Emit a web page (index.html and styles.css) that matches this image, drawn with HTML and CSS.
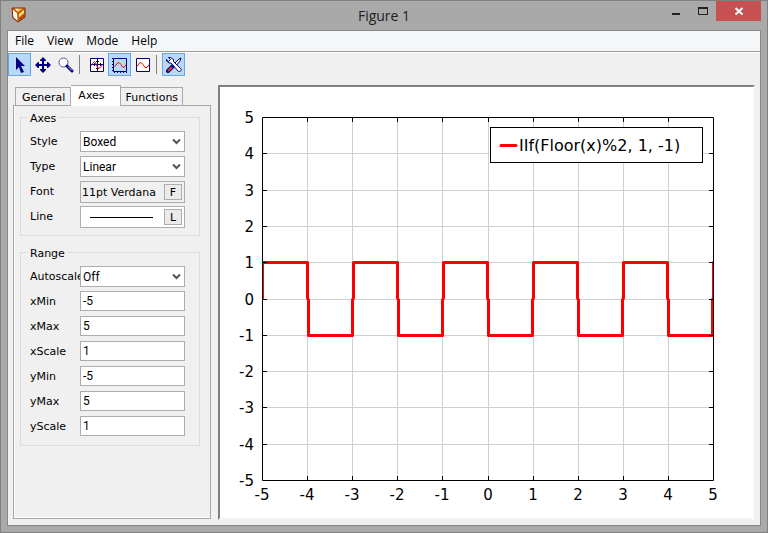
FILE: index.html
```
<!DOCTYPE html>
<html lang="en">
<head>
    <meta charset="UTF-8">
    <title>Figure 1</title>
    <link rel="stylesheet" href="styles.css">
</head>
<body>

<div class="window">

    <header class="titlebar">
        <svg class="logo" width="16" height="16" viewBox="0 0 16 16">
            <path d="M1 1h13v9l-7 5-5-4z" fill="#e07a10"/>
            <path d="M1 2l5 4 1 8-5-4z" fill="#fffaf0"/>
            <path d="M3 1h9L7 5z" fill="#ffc24a"/>
            <path d="M4 1h4L6 4z" fill="#fff0c0"/>
            <path d="M8 7l5-4v3l-5 4z" fill="#ffe080"/>
            <path d="M8 11l5-4v3l-5 4z" fill="#b84a08"/>
            <path d="M1 1h13v9l-7 5-5-4z" fill="none" stroke="#7a2206"/>
            <path d="M2 2l5 4 6-4M7 6v8" fill="none" stroke="#a04008" stroke-width=".8"/>
        </svg>
        <h1>Figure 1</h1>
        <div class="controls">
            <button type="button" aria-label="Minimize"><svg width="10" height="10" viewBox="0 0 10 10"><path d="M1 7h8v2H1z"/></svg></button>
            <button type="button" aria-label="Maximize"><svg width="10" height="10" viewBox="0 0 10 10"><path d="M0 1h10v8H0zM1 3v5h8V3z" fill-rule="evenodd"/></svg></button>
            <button type="button" class="close" aria-label="Close"><svg width="10" height="10" viewBox="0 0 10 10"><path d="M1.500 2l7 6.500M8.500 2l-7 6.500" fill="none" stroke="#fff" stroke-width="2"/></svg></button>
        </div>
    </header>

    <div class="client">

        <nav class="menubar">
            <button type="button">File</button>
            <button type="button">View</button>
            <button type="button">Mode</button>
            <button type="button">Help</button>
        </nav>

        <div class="toolbar">
            <button type="button" class="on" aria-label="Select">
                <svg width="16" height="16" viewBox="0 0 16 16"><path d="M4 0l9 9H9l3 6-3 1-2-6-3 3z" fill="#000080"/></svg>
            </button>
            <button type="button" aria-label="Pan">
                <svg width="16" height="16" viewBox="0 0 16 16"><path d="M8 0l3 3v1H9v3h3V5h1l3 3-3 3h-1V9H9v3h2v1l-3 3-3-3v-1h2V9H4v2H3L0 8l3-3h1v2h3V4H5V3z" fill="#000080"/></svg>
            </button>
            <button type="button" aria-label="Zoom">
                <svg width="16" height="16" viewBox="0 0 16 16"><circle cx="5.500" cy="5.500" r="4.500" fill="#fff" stroke="#55559a"/><path d="M9 9l5 5" stroke="#000080" stroke-width="3" stroke-linecap="round"/><path d="M10 9.500l4 4" stroke="#c8c8e8"/></svg>
            </button>
            <span class="sep"></span>
            <button type="button" aria-label="Crossed axes">
                <svg width="16" height="16" viewBox="0 0 16 16"><path d="M1.500 1.500h13v13h-13z" fill="#fff" stroke="#000080"/><path d="M2 7.500h12M8.500 2v12" stroke="#000080"/><path d="M5.500 6v3M11.500 6v3M7 4.500h3M7 11.500h3" stroke="#000080"/><path d="M2.500 8.500l1-2 2-2 1 1 1 3 2 3 2-1 2-3" fill="none" stroke="#f00"/></svg>
            </button>
            <button type="button" class="on" aria-label="Boxed axes">
                <svg width="16" height="16" viewBox="0 0 16 16"><path d="M1.500 1.500h13v13h-13z" fill="none" stroke="#000080"/><path d="M.5 1v14M2 15.500h13" stroke="#000080" stroke-dasharray="1 2"/><path d="M3 9.500l2-3 2-1 2 2 1 2 2 1 2-3" fill="none" stroke="#f00"/></svg>
            </button>
            <button type="button" aria-label="No axes">
                <svg width="16" height="16" viewBox="0 0 16 16"><path d="M1.500 1.500h13v13h-13z" fill="#fff" stroke="#000080"/><path d="M2 9.500l2-3 2-1 2 2 2 3 2 0 2-3" fill="none" stroke="#f00"/></svg>
            </button>
            <span class="sep"></span>
            <button type="button" class="on" aria-label="Properties">
                <svg width="16" height="16" viewBox="0 0 16 16">
                    <path d="M2 14l5-5" stroke="#000080" stroke-width="4" stroke-linecap="round"/>
                    <path d="M2 14l4-4" stroke="#f03030" stroke-width="2"/>
                    <path d="M7 8l6-6 2-1-1 3-5 6z" fill="#fff" stroke="#000080"/>
                    <path d="M.5 2.500l2 2 2-2-2-2h2l3 2v2l7 7c2 2-1 4-2.500 2.500l-7-8h-2l-2.500-2z" fill="#fff" stroke="#000080"/>
                </svg>
            </button>
        </div>

        <main>

            <aside class="side">
                <div class="tabs" role="tablist">
                    <button type="button" role="tab">General</button>
                    <button type="button" role="tab" class="active" aria-selected="true">Axes</button>
                    <button type="button" role="tab">Functions</button>
                </div>
                <form class="panel">
                    <fieldset>
                        <legend>Axes</legend>
                        <div class="row">
                            <label for="style">Style</label>
                            <select id="style"><option>Boxed</option></select>
                        </div>
                        <div class="row">
                            <label for="type">Type</label>
                            <select id="type"><option>Linear</option></select>
                        </div>
                        <div class="row">
                            <label for="font">Font</label>
                            <div class="picker font">
                                <span>11pt Verdana</span>
                                <button type="button" id="font">F</button>
                            </div>
                        </div>
                        <div class="row">
                            <label for="line">Line</label>
                            <div class="picker">
                                <span class="stroke"></span>
                                <button type="button" id="line">L</button>
                            </div>
                        </div>
                    </fieldset>
                    <fieldset>
                        <legend>Range</legend>
                        <div class="row">
                            <label for="autoscale">Autoscale</label>
                            <select id="autoscale"><option>Off</option></select>
                        </div>
                        <div class="row">
                            <label for="xmin">xMin</label>
                            <input type="text" id="xmin" value="-5">
                        </div>
                        <div class="row">
                            <label for="xmax">xMax</label>
                            <input type="text" id="xmax" value="5">
                        </div>
                        <div class="row">
                            <label for="xscale">xScale</label>
                            <input type="text" id="xscale" value="1">
                        </div>
                        <div class="row">
                            <label for="ymin">yMin</label>
                            <input type="text" id="ymin" value="-5">
                        </div>
                        <div class="row">
                            <label for="ymax">yMax</label>
                            <input type="text" id="ymax" value="5">
                        </div>
                        <div class="row">
                            <label for="yscale">yScale</label>
                            <input type="text" id="yscale" value="1">
                        </div>
                    </fieldset>
                </form>
            </aside>

            <section class="plot">
                <svg viewBox="0 0 533 431">
                    <clipPath id="area"><path d="M42 30h452v364H42z"/></clipPath>

                    <!-- grid -->
                    <path class="grid" d="M87.500 30v363M132.500 30v363M177.500 30v363M222.500 30v363M268.500 30v363M313.500 30v363M358.500 30v363M403.500 30v363M448.500 30v363"/>
                    <path class="grid" d="M42 66.500h451M42 103.500h451M42 139.500h451M42 175.500h451M42 212.500h451M42 248.500h451M42 284.500h451M42 320.500h451M42 357.500h451"/>

                    <!-- function -->
                    <path class="curve" clip-path="url(#area)" d="M42.500 211V175.500H87.500V211L88.500 213V248.500H132.500V213L133.500 211V175.500H177.500V211L178.500 213V248.500H222.500V213L223.500 211V175.500H267.500V211L268.500 213V248.500H312.500V213L313.500 211V175.500H357.500V211L358.500 213V248.500H402.500V213L403.500 211V175.500H447.500V211L448.500 213V248.500H492.500V213L493.500 211V175.500"/>

                    <!-- frame and ticks -->
                    <path class="axis" d="M42.500 30.500h451v363h-451z"/>
                    <path class="axis" d="M87.500 30v5M132.500 30v5M177.500 30v5M222.500 30v5M268.500 30v5M313.500 30v5M358.500 30v5M403.500 30v5M448.500 30v5"/>
                    <path class="axis" d="M87.500 389v5M132.500 389v5M177.500 389v5M222.500 389v5M268.500 389v5M313.500 389v5M358.500 389v5M403.500 389v5M448.500 389v5"/>
                    <path class="axis" d="M42 66.500h5M42 103.500h5M42 139.500h5M42 175.500h5M42 212.500h5M42 248.500h5M42 284.500h5M42 320.500h5M42 357.500h5"/>
                    <path class="axis" d="M489 66.500h5M489 103.500h5M489 139.500h5M489 175.500h5M489 212.500h5M489 248.500h5M489 284.500h5M489 320.500h5M489 357.500h5"/>

                    <g class="ylabels">
                        <text x="34" y="36">5</text>
                        <text x="34" y="72">4</text>
                        <text x="34" y="109">3</text>
                        <text x="34" y="145">2</text>
                        <text x="34" y="181">1</text>
                        <text x="34" y="218">0</text>
                        <text x="34" y="254">-1</text>
                        <text x="34" y="290">-2</text>
                        <text x="34" y="326">-3</text>
                        <text x="34" y="363">-4</text>
                        <text x="34" y="399">-5</text>
                    </g>
                    <g class="xlabels">
                        <text x="42" y="413">-5</text>
                        <text x="87" y="413">-4</text>
                        <text x="132" y="413">-3</text>
                        <text x="177" y="413">-2</text>
                        <text x="222" y="413">-1</text>
                        <text x="268" y="413">0</text>
                        <text x="313" y="413">1</text>
                        <text x="358" y="413">2</text>
                        <text x="403" y="413">3</text>
                        <text x="448" y="413">4</text>
                        <text x="493" y="413">5</text>
                    </g>

                    <!-- legend -->
                    <rect class="box" x="270.500" y="40.500" width="212" height="35"/>
                    <path class="curve" d="M281 58.500h15"/>
                    <text class="name" x="299" y="64">IIf(Floor(x)%2, 1, -1)</text>
                </svg>
            </section>

        </main>
    </div>
</div>

</body>
</html>
```
FILE: styles.css
```
* {
    box-sizing: border-box;
}
body {
    margin: 0;
    font-family: Verdana, "DejaVu Sans", sans-serif;
    font-size: 11px;
    color: #000;
}
button, input, select {
    margin: 0;
    padding: 0;
    border: none;
    background: none;
    font: inherit;
    color: inherit;
}

.window {
    display: flex;
    flex-direction: column;
    min-height: 100vh;
    padding: 0 6px 6px;
    border: 1px solid #808080;
    background-color: #a9a9a9;
}

/* title bar */
.titlebar {
    display: grid;
    grid-template-columns: 1fr auto 1fr;
    height: 29px;
}
.logo {
    margin: 6px 0 0 4px;
}
.titlebar h1 {
    margin: 0;
    font-family: "Open Sans", "Segoe UI", sans-serif;
    font-size: 14px;
    font-weight: normal;
    line-height: 29px;
    color: #222;
}
.controls {
    display: flex;
    justify-content: flex-end;
}
.controls button {
    display: flex;
    justify-content: center;
    align-items: center;
    width: 27px;
    height: 20px;
    fill: #222;
}
.controls .close {
    width: 45px;
    background-color: #c75050;
}

.client {
    flex: 1;
    display: flex;
    flex-direction: column;
    border: 1px solid #888;
    background-color: #f0f0f0;
}

/* menu and toolbar */
.menubar {
    display: flex;
    gap: 13px;
    height: 21px;
    padding-left: 7px;
    border-bottom: 1px solid #999;
    background-color: #f5f6f7;
    font-family: "Open Sans", "Segoe UI", sans-serif;
    font-size: 12px;
    line-height: 20px;
}
.toolbar {
    display: flex;
    height: 25px;
    border-top: 1px solid #fff;
}
.toolbar button {
    display: flex;
    justify-content: center;
    align-items: center;
    width: 23px;
    height: 23px;
    border: 1px solid transparent;
}
.toolbar .on {
    border-color: #66a7e8;
    background-color: #b8d8f8;
}
.sep {
    width: 1px;
    height: 19px;
    margin: 2px 5px 0 2px;
    background-color: #808080;
}

main {
    flex: 1;
    display: flex;
    gap: 7px;
    padding: 8px 5px 5px;
}

/* settings */
.side {
    display: flex;
    flex-direction: column;
    width: 198px;
    margin-bottom: 1px;
}
.tabs {
    display: flex;
    align-items: flex-end;
    height: 20px;
    padding-left: 2px;
}
.tabs button {
    height: 18px;
    padding: 2px 5px 0 6px;
    border: 1px solid #a8a8a8;
    border-bottom: none;
    line-height: 14px;
}
.tabs button + button {
    padding: 2px 4px 0 5px;
    border-left: none;
}
.tabs .active + button {
    border-left: none;
}
.tabs button.active {
    z-index: 1;
    height: 21px;
    margin-bottom: -1px;
    padding: 0 15px 0 7px;
    background-color: #fff;
}
.panel {
    flex: 1;
    padding: 6px 10px 0 6px;
    border: 1px solid #a8a8a8;
    box-shadow: inset 1px -1px #fff;
}
fieldset {
    margin: 0 0 11px;
    padding: 8px 14px 4px 9px;
    border: 1px solid #dcdcdc;
}
legend {
    height: 11px;
    margin-left: -2px;
    padding: 0 2px;
    line-height: 13px;
}
.row {
    display: flex;
    align-items: flex-start;
    height: 25px;
}
.row label {
    width: 50px;
    line-height: 22px;
}
.row input, .row select, .picker {
    position: relative;
    width: 105px;
    height: 20px;
    border: 1px solid #abadb3;
    background-color: #fff;
}
.row input, .row select {
    padding: 0 2px;
    font-family: "Liberation Sans Narrow", Roboto, sans-serif;
    font-size: 12px;
}
.row select {
    appearance: none;
    height: 21px;
    background: #fff url("data:image/svg+xml,%3Csvg xmlns='http://www.w3.org/2000/svg' width='9' height='7' viewBox='0 0 9 7'%3E%3Cpath d='M1 1.500l3.500 3.500L8 1.500' fill='none' stroke='%23555' stroke-width='2'/%3E%3C/svg%3E") no-repeat right 3px center;
}
.row .picker {
    display: flex;
    align-items: center;
    justify-content: space-between;
    height: 22px;
    padding: 0 2px 0 1px;
}
.picker.font {
    background-color: #f0f0f0;
}
.picker button {
    width: 18px;
    height: 16px;
    border: 1px solid #acacac;
    background-color: #ebebeb;
}
.stroke {
    width: 63px;
    height: 1px;
    margin-left: 8px;
    background-color: #000;
}

/* figure */
.plot {
    flex: 1;
    border: 2px solid;
    border-color: #808080 #f4f4f4 #f4f4f4 #808080;
    background-color: #fff;
}
.plot svg {
    display: block;
    width: 100%;
    font-size: 15px;
}
.grid {
    stroke: #d0d0d0;
}
.axis {
    fill: none;
    stroke: #000;
}
.curve {
    fill: none;
    stroke: #f00;
    stroke-width: 3;
    stroke-linecap: round;
    stroke-linejoin: round;
}
.box {
    fill: #fff;
    stroke: #000;
}
.ylabels {
    text-anchor: end;
}
.xlabels {
    text-anchor: middle;
}
.name {
    font-size: 16px;
}
```
